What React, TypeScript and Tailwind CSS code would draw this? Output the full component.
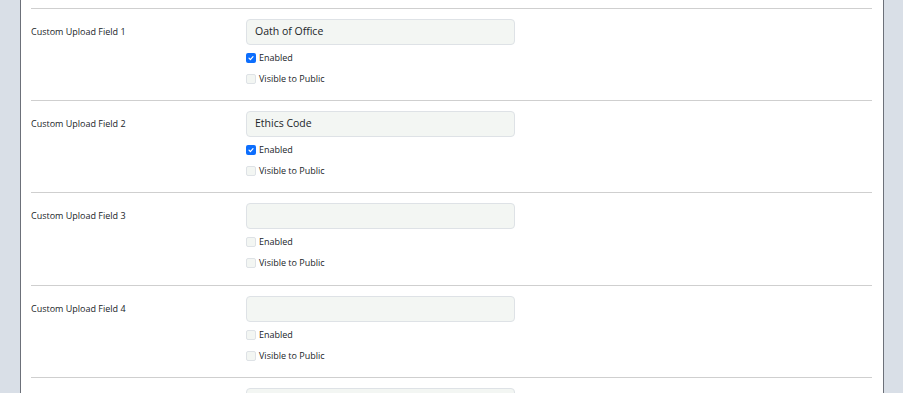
import React from "react";

type Field = { label: string; value: string; enabled: boolean; h: string };

const fields: Field[] = [
  { label: "Custom Upload Field 1", value: "Oath of Office", enabled: true, h: "h-[92px]" },
  { label: "Custom Upload Field 2", value: "Ethics Code", enabled: true, h: "h-[92px]" },
  { label: "Custom Upload Field 3", value: "", enabled: false, h: "h-[93px]" },
  { label: "Custom Upload Field 4", value: "", enabled: false, h: "h-[92px]" },
];

function Check({ checked, label }: { checked: boolean; label: string }) {
  return (
    <label className="flex items-center h-[21px] gap-[3px]">
      {checked ? (
        <span className="w-[10px] h-[10px] rounded-[2px] bg-[#0d6efd] flex items-center justify-center">
          <svg width="8" height="8" viewBox="0 0 8 8">
            <path d="M2 4.2 L3.4 5.6 L6 2.6" stroke="white" strokeWidth="1.2" fill="none" strokeLinecap="round" strokeLinejoin="round" />
          </svg>
        </span>
      ) : (
        <span className="w-[10px] h-[10px] rounded-[2px] bg-[#f3f6f3] border border-[#dee2e6]" />
      )}
      <span className="text-[9px] text-[#212529] leading-none">{label}</span>
    </label>
  );
}

function Row({ f }: { f: Field }) {
  return (
    <div className={`border-t border-[#cfcfcf] ${f.h} grid grid-cols-[215px_269px] pt-[10px]`}>
      <div className="text-[9px] text-[#212529] leading-[12px] pt-[7px]">{f.label}</div>
      <div className="flex flex-col">
        <div className="h-[26px] rounded-[4px] bg-[#f3f6f3] border border-[#dee2e6] flex items-center px-[8px] text-[10.5px] text-[#212529]">
          {f.value}
        </div>
        <div className="pt-[2px]">
          <Check checked={f.enabled} label="Enabled" />
          <Check checked={false} label="Visible to Public" />
        </div>
      </div>
    </div>
  );
}

export default function App() {
  return (
    <div
      className="w-[903px] h-[393px] bg-[#d9dfe7] flex overflow-hidden"
      style={{ fontFamily: '"Open Sans", "Noto Sans", sans-serif' }}
    >
      <div className="w-[20px] shrink-0" />
      <div className="w-[864px] shrink-0 bg-white border-l border-r border-[#6c7079] pl-[10px] pr-[11px] pt-[8px]">
        {fields.map((f) => (
          <Row key={f.label} f={f} />
        ))}
        <div className="border-t border-[#cfcfcf] pt-[10px] grid grid-cols-[215px_269px]">
          <div />
          <div className="h-[26px] rounded-[4px] bg-[#f3f6f3] border border-[#dee2e6]" />
        </div>
      </div>
    </div>
  );
}
